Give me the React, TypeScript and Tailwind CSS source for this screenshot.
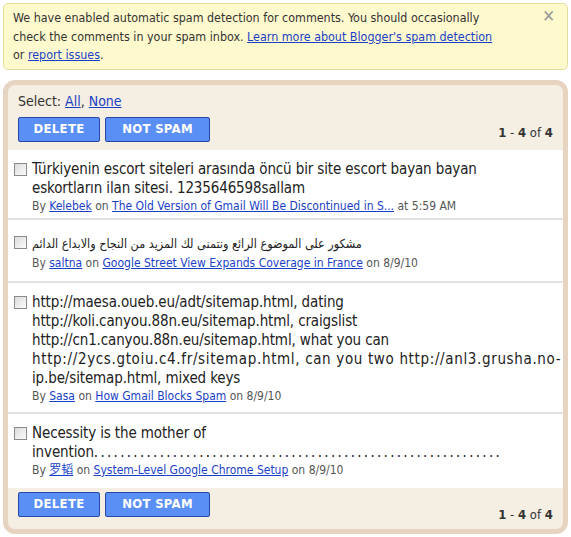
import React from 'react';

type Comment = {
  lines: React.ReactNode[];
  author: string;
  post: string;
  when: string;
  pad: string;
  rtl?: boolean;
};

const comments: Comment[] = [
  {
    lines: ['Türkiyenin escort siteleri arasında öncü bir site escort bayan bayan', 'eskortların ilan sitesi. 1235646598sallam'],
    author: 'Kelebek',
    post: 'The Old Version of Gmail Will Be Discontinued in S...',
    when: 'at 5:59 AM',
    pad: 'pt-[10px] pb-[3px]',
  },
  {
    lines: ['مشكور على الموضوع الرائع ونتمنى لك المزيد من النجاح والابداع الدائم'],
    author: 'saltna',
    post: 'Google Street View Expands Coverage in France',
    when: 'on 8/9/10',
    pad: 'pt-[13px] pb-[9px]',
    rtl: true,
  },
  {
    lines: [
      'http://maesa.oueb.eu/adt/sitemap.html, dating',
      'http://koli.canyou.88n.eu/sitemap.html, craigslist',
      'http://cn1.canyou.88n.eu/sitemap.html, what you can',
      <span className="tracking-[0.65px]">http://2ycs.gtoiu.c4.fr/sitemap.html, can you two http://anl3.grusha.no-</span>,
      'ip.be/sitemap.html, mixed keys',
    ],
    author: 'Sasa',
    post: 'How Gmail Blocks Spam',
    when: 'on 8/9/10',
    pad: 'pt-[10px] pb-[7px]',
  },
  {
    lines: [
      'Necessity is the mother of',
      <>
        invention<span className="tracking-[2.3px]">..............................................................</span>
      </>,
    ],
    author: '罗韬',
    post: 'System-Level Google Chrome Setup',
    when: 'on 8/9/10',
    pad: 'pt-[10px] pb-[9px]',
  },
];

const font = { fontFamily: '"DejaVu Sans Condensed", "DejaVu Sans", "Noto Sans CJK SC", sans-serif' };

const Checkbox = () => (
  <span className="mt-[3px] block h-[13px] w-[13px] shrink-0 border border-[#8a8a8a] bg-gradient-to-br from-[#dcdcdc] to-[#fbfbfb]" />
);

const Toolbar = ({ top }: { top?: boolean }) => (
  <div className="flex items-end justify-between">
    <div className="flex gap-[5px]">
      <button className="h-[25px] w-[82px] rounded-[2px] border border-[#2848a8] bg-[#5a8ff6] text-[13px] font-bold tracking-[0.3px] text-white">
        DELETE
      </button>
      <button className="h-[25px] w-[105px] rounded-[2px] border border-[#2848a8] bg-[#5a8ff6] text-[13px] font-bold tracking-[0.3px] text-white">
        NOT SPAM
      </button>
    </div>
    <div className={`text-[13px] text-[#333] ${top ? 'mb-[-1px]' : 'mb-[-8px]'}`}>
      <b>1</b> - <b>4</b> of <b>4</b>
    </div>
  </div>
);

export default function App() {
  const last = comments.length - 1;
  return (
    <div className="min-h-[537px] bg-white px-[3px] pt-[3px]" style={font}>
      {/* Spam notice */}
      <div className="relative rounded-[5px] border border-[#e4dd9c] bg-[#fffacd] pt-[5px] pb-[4px] pl-[9px] pr-[70px] text-[12.4px] leading-[18.5px] text-[#333]">
        We have enabled automatic spam detection for comments. You should occasionally check the comments in your spam inbox.{' '}
        <a className="text-[#1a3fc7] underline">Learn more about Blogger's spam detection</a> or{' '}
        <a className="text-[#1a3fc7] underline">report issues</a>.
        <span className="absolute right-[12px] top-[3px] text-[17px] font-bold text-[#9a9a9a]">✕</span>
      </div>

      {/* Spam inbox panel */}
      <div className="mt-[10px] rounded-[12px] border-[5px] border-[#e6d4c1] bg-[#f5eee2]">
        <div className="px-[10px] pt-[7px] pb-[8px]">
          <div className="mb-[7px] text-[14px] leading-[18px] text-[#333]">
            Select: <a className="text-[#1a3fc7] underline">All</a>, <a className="text-[#1a3fc7] underline">None</a>
          </div>
          <Toolbar top />
        </div>

        <div className="bg-white">
          {comments.map((c, i) => (
            <div
              key={i}
              className={`flex gap-[5px] pl-[6px] pr-[2px] ${c.pad} ${i === last ? '' : 'border-b-2 border-[#e2e2e2]'}`}
            >
              <Checkbox />
              <div>
                <div
                  className={c.rtl ? 'w-fit text-[12.5px] leading-[22px] text-[#222]' : 'text-[15px] leading-[19px] tracking-[-0.13px] text-[#222]'}
                  style={c.rtl ? { direction: 'rtl' } : undefined}
                >
                  {c.lines.map((l, j) => (
                    <div key={j} className="whitespace-nowrap">{l}</div>
                  ))}
                </div>
                <div className="text-[12px] leading-[17px] text-[#555]">
                  By <a className="text-[#1a3fc7] underline">{c.author}</a> on{' '}
                  <a className="text-[#1a3fc7] underline">{c.post}</a> {c.when}
                </div>
              </div>
            </div>
          ))}
        </div>

        <div className="px-[10px] pt-[4px] pb-[12px]">
          <Toolbar />
        </div>
      </div>
    </div>
  );
}
